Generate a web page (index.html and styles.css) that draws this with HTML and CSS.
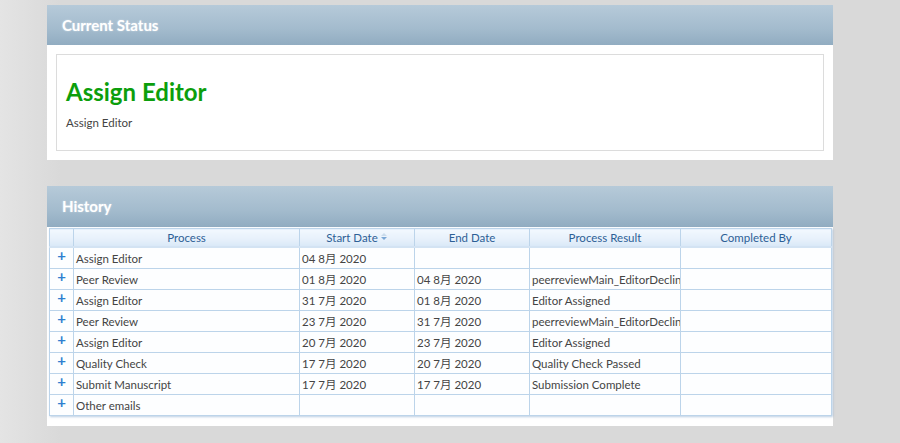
FILE: index.html
```html
<!DOCTYPE html>
<html lang="en">
<head>
    <meta charset="UTF-8">
    <title>Manuscript Status</title>
    <link rel="stylesheet" href="styles.css">
</head>
<body>
    <div class="pagina">
        <!-- Current Status -->
        <div class="painel">
            <div class="painel-topo">Current Status</div>
            <div class="painel-corpo">
                <div class="status-box">
                    <div class="status-titulo">Assign Editor</div>
                    <div class="status-sub">Assign Editor</div>
                </div>
            </div>
        </div>

        <!-- History -->
        <div class="painel historico">
            <div class="painel-topo">History</div>
            <div class="tabela-wrap">
                <table class="tabela">
                    <colgroup>
                        <col class="c-mais">
                        <col class="c-proc">
                        <col class="c-data">
                        <col class="c-data">
                        <col class="c-res">
                        <col class="c-res">
                    </colgroup>
                    <thead>
                        <tr>
                            <th></th>
                            <th>Process</th>
                            <th>Start Date <span class="ordem"><i class="seta-cima"></i><i class="seta-baixo"></i></span></th>
                            <th>End Date</th>
                            <th>Process Result</th>
                            <th>Completed By</th>
                        </tr>
                    </thead>
                    <tbody>
                        <tr><td class="mais">+</td><td>Assign Editor</td><td>04 8月 2020</td><td></td><td></td><td></td></tr>
                        <tr><td class="mais">+</td><td>Peer Review</td><td>01 8月 2020</td><td>04 8月 2020</td><td>peerreviewMain_EditorDeclined</td><td></td></tr>
                        <tr><td class="mais">+</td><td>Assign Editor</td><td>31 7月 2020</td><td>01 8月 2020</td><td>Editor Assigned</td><td></td></tr>
                        <tr><td class="mais">+</td><td>Peer Review</td><td>23 7月 2020</td><td>31 7月 2020</td><td>peerreviewMain_EditorDeclined</td><td></td></tr>
                        <tr><td class="mais">+</td><td>Assign Editor</td><td>20 7月 2020</td><td>23 7月 2020</td><td>Editor Assigned</td><td></td></tr>
                        <tr><td class="mais">+</td><td>Quality Check</td><td>17 7月 2020</td><td>20 7月 2020</td><td>Quality Check Passed</td><td></td></tr>
                        <tr><td class="mais">+</td><td>Submit Manuscript</td><td>17 7月 2020</td><td>17 7月 2020</td><td>Submission Complete</td><td></td></tr>
                        <tr><td class="mais">+</td><td>Other emails</td><td></td><td></td><td></td><td></td></tr>
                    </tbody>
                </table>
            </div>
        </div>
    </div>
</body>
</html>
```

FILE: styles.css
```css
body {
    margin: 0;
    font-family: "Lato", "Noto Sans CJK SC", sans-serif;
    font-size: 11.5px;
    color: #333;
    background: linear-gradient(90deg, #e4e4e4 0px, #d9d9d9 60px, #d9d9d9 100%);
}

.pagina {
    width: 786px;
    margin-left: 47px;
    padding-top: 5px;
}

.painel {
    background: #fff;
    margin-bottom: 26px;
}

.painel-topo {
    height: 40px;
    line-height: 40px;
    padding-left: 15px;
    color: #fff;
    font-size: 15px;
    font-weight: bold;
    text-shadow: 0 0 2px rgba(255,255,255,0.5);
    background: linear-gradient(180deg, #b6cad9 0%, #a3bbcd 60%, #91acc1 100%);
}

.painel-corpo {
    padding: 9px;
}

.status-box {
    border: 1px solid #dcdcdc;
    height: 95px;
    padding: 0 9px;
}

.status-titulo {
    color: #0c9e0c;
    font-size: 24px;
    font-weight: bold;
    margin-top: 22px;
    line-height: 30px;
}

.status-sub {
    margin-top: 9px;
    font-size: 11.5px;
    color: #444;
}

.historico .painel-topo {
    height: 41px;
    line-height: 41px;
}

.tabela-wrap {
    padding: 1px 1px 10px 2px;
}

.tabela {
    width: 782px;
    table-layout: fixed;
    border-collapse: collapse;
    border: 1px solid #a9c8e3;
    box-shadow: 1px 1px 2px rgba(120,160,200,0.5);
}

.c-mais { width: 24px; }
.c-proc { width: 226px; }
.c-data { width: 115px; }
.c-res { width: 151px; }

.tabela th {
    height: 17px;
    padding: 0;
    font-weight: normal;
    color: #2d5f96;
    text-align: center;
    background: linear-gradient(180deg, #f2f8fe 0%, #e6f0fb 60%, #d9e8f7 100%);
    border: 1px solid #bcd4ea;
    border-bottom: 2px solid #d3e3f3;
    white-space: nowrap;
    overflow: hidden;
}

.tabela td {
    height: 20px;
    padding: 0 0 0 2px;
    border: 1px solid #bcd4ea;
    background: #fdfeff;
    color: #444;
    white-space: nowrap;
    overflow: hidden;
}

.tabela td.mais {
    color: #2f7fd0;
    font-size: 15px;
    font-weight: bold;
    text-align: center;
    vertical-align: top;
    line-height: 15px;
    padding: 0;
}

.ordem {
    display: inline-block;
    vertical-align: top;
    margin-top: 2px;
    width: 7px;
}

.seta-cima,
.seta-baixo {
    display: block;
    width: 0;
    height: 0;
    border-left: 3px solid transparent;
    border-right: 3px solid transparent;
}

.seta-cima {
    border-bottom: 3px solid #c9dbec;
    margin-bottom: 1px;
}

.seta-baixo {
    border-top: 3px solid #7aa7d6;
}
```
